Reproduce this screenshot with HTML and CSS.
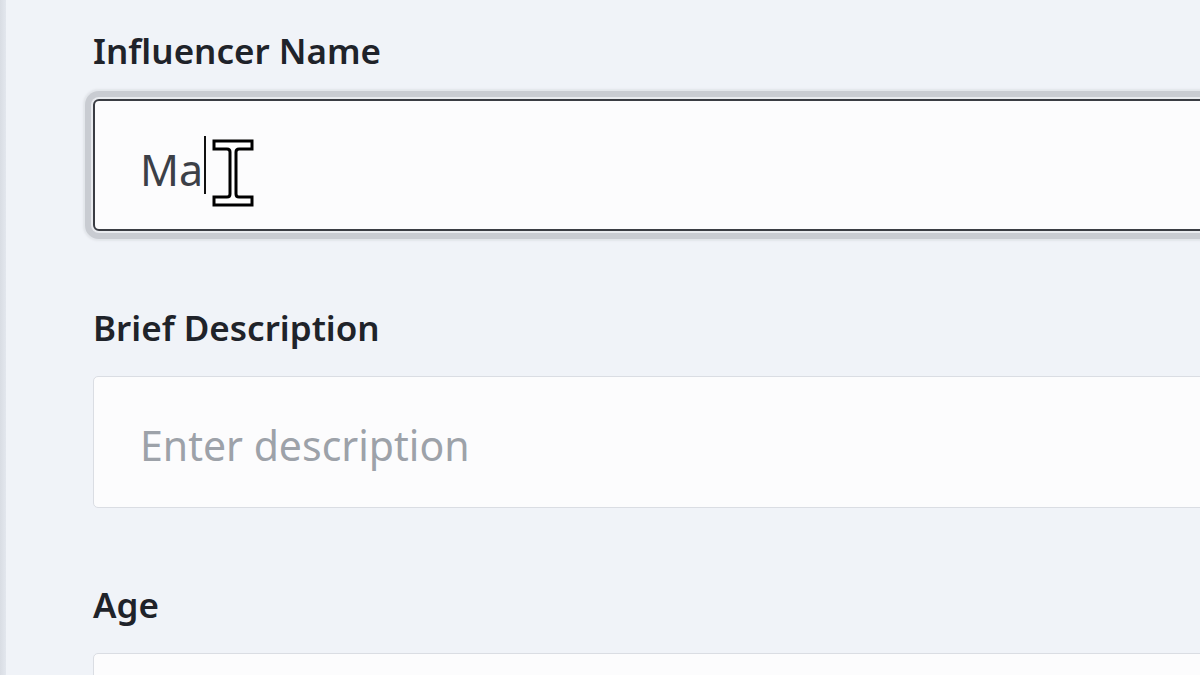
FILE: index.html
```html
<!DOCTYPE html>
<html lang="en">
<head>
<meta charset="utf-8">
<title>Influencer form</title>
<link rel="stylesheet" href="styles.css">
</head>
<body>
<div class="page">
  <div class="rail"></div>
  <main class="form">
    <div class="field">
      <label class="label">Influencer Name</label>
      <div class="input input-focus">
        <span class="value">Ma</span><span class="caret"></span>
        <svg class="ibeam" width="42" height="68" viewBox="0 0 42 68" aria-hidden="true">
          <path d="M2 2 H40 V10 H27 Q24 10 24 13 V55 Q24 58 27 58 H40 V66 H2 V58 H15 Q18 58 18 55 V13 Q18 10 15 10 H2 Z" fill="#fff" stroke="#000" stroke-width="3" stroke-linejoin="miter"/>
        </svg>
      </div>
    </div>
    <div class="field">
      <label class="label">Brief Description</label>
      <div class="input">
        <span class="placeholder">Enter description</span>
      </div>
    </div>
    <div class="field">
      <label class="label">Age</label>
      <div class="input"></div>
    </div>
  </main>
</div>
</body>
</html>
```
FILE: styles.css
```css
* { box-sizing: border-box; }
html, body { margin: 0; padding: 0; }
body {
  width: 1200px;
  height: 675px;
  overflow: hidden;
  background: #f0f3f8;
  font-family: "Noto Sans", "Open Sans", sans-serif;
}
.page {
  display: flex;
  height: 675px;
  overflow: hidden;
}
.rail {
  width: 6px;
  flex: none;
  background: linear-gradient(to right, #d9dde4, #e3e7ee);
}
.form {
  flex: 1;
  display: flex;
  flex-direction: column;
  gap: 75px;
  padding: 29px 0 0 87px;
  margin-right: -40px;
}
.field {
  display: flex;
  flex-direction: column;
  gap: 26px;
}
.label {
  display: block;
  font-size: 35px;
  line-height: 44px;
  font-weight: 600;
  color: #1f232a;
}
.input {
  position: relative;
  height: 132px;
  flex: none;
  border: 1px solid #dadde3;
  border-radius: 5px;
  background: #fcfcfd;
  display: flex;
  align-items: center;
  padding: 6px 0 0 46px;
  font-size: 43px;
}
.input-focus {
  border: 2px solid #3a3d43;
  border-radius: 6px;
  padding: 8px 0 0 45px;
  box-shadow: 0 0 0 2px #e9ebef, 0 0 0 8px #c9ccd2, 0 0 2px 10px #e2e5ea;
}
.value {
  color: #3c4047;
}
.caret {
  display: inline-block;
  width: 2px;
  height: 58px;
  margin-left: 1px;
  margin-top: -8px;
  background: #111;
}
.placeholder {
  font-size: 41px;
  color: #9da2a9;
}
.ibeam {
  position: absolute;
  left: 117px;
  top: 38px;
}
```
